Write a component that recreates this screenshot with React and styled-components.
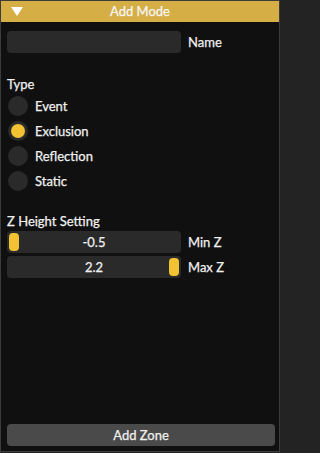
import React, { useState } from 'react';
import styled, { createGlobalStyle } from 'styled-components';

const GlobalStyle = createGlobalStyle`
  html, body {
    margin: 0;
    padding: 0;
    background: #232323;
  }
  body {
    font-family: Lato, "Noto Sans", sans-serif;
    font-size: 13px;
    color: #f0f0f0;
    -webkit-text-stroke: 0.25px currentColor;
  }
`;

const Window = styled('div')`
  box-sizing: border-box;
  width: 280px;
  height: 452px;
  background: #101010;
  border: 1px solid #3c3c3c;
  display: flex;
  flex-direction: column;
`;

const TitleBar = styled('div')`
  height: 21px;
  background: #d5ae45;
  display: flex;
  align-items: center;
  position: relative;
  color: #f6f6f6;
  flex-shrink: 0;
  .arrow {
    position: absolute;
    left: 10px;
    top: 6px;
  }
  .title {
    flex: 1;
    text-align: center;
    line-height: 21px;
  }
`;

const Body = styled('div')`
  flex: 1;
  display: flex;
  flex-direction: column;
  padding: 9px 4px 5px 6px;
`;

const Row = styled('div')`
  display: flex;
  align-items: center;
  gap: 7px;
  height: 22px;
  margin-top: ${p => p.mt || 0}px;
`;

const Field = styled('div')`
  box-sizing: border-box;
  width: 174px;
  height: 22px;
  background: #2a2a2a;
  border-radius: 4px;
  position: relative;
  text-align: center;
  line-height: 22px;
`;

const Label = styled('div')`
  line-height: 16px;
  height: 16px;
  margin-top: ${p => p.mt || 0}px;
`;

const RadioRow = styled('div')`
  display: flex;
  align-items: center;
  gap: 7px;
  height: 25px;
  padding-left: 1px;
  cursor: pointer;
`;

const RadioDot = styled('div')`
  width: 20px;
  height: 20px;
  border-radius: 50%;
  background: #2a2a2a;
  display: flex;
  align-items: center;
  justify-content: center;
  &::after {
    content: '';
    width: 14px;
    height: 14px;
    border-radius: 50%;
    background: ${p => (p.on ? '#f3c232' : 'transparent')};
  }
`;

const Grab = styled('div')`
  position: absolute;
  top: 2px;
  width: 10px;
  height: 18px;
  border-radius: 4px;
  background: #f3c232;
`;

const Spacer = styled('div')`
  flex: 1;
`;

const Button = styled('div')`
  height: 22px;
  background: #4a4a4a;
  border-radius: 4px;
  text-align: center;
  line-height: 22px;
`;

const TYPES = ['Event', 'Exclusion', 'Reflection', 'Static'];

const App = () => {
  const [type, setType] = useState('Exclusion');
  return (
    <>
      <GlobalStyle />
      <Window>
        <TitleBar>
          <svg className="arrow" width="12" height="10" viewBox="0 0 12 10">
            <polygon points="0,0 12,0 6,9" fill="#ffffff" />
          </svg>
          <div className="title">Add Mode</div>
        </TitleBar>
        <Body>
          <Row>
            <Field />
            <span>Name</span>
          </Row>
          <Label mt={23}>Type</Label>
          <div style={{ marginTop: 1 }}>
            {TYPES.map(t => (
              <RadioRow key={t} onClick={() => setType(t)}>
                <RadioDot on={t === type} />
                <span>{t}</span>
              </RadioRow>
            ))}
          </div>
          <Label mt={20}>Z Height Setting</Label>
          <Row mt={2}>
            <Field>
              <Grab style={{ left: 2 }} />
              -0.5
            </Field>
            <span>Min Z</span>
          </Row>
          <Row mt={3}>
            <Field>
              <Grab style={{ right: 2 }} />
              2.2
            </Field>
            <span>Max Z</span>
          </Row>
          <Spacer />
          <Button>Add Zone</Button>
        </Body>
      </Window>
    </>
  );
};

export default App;
